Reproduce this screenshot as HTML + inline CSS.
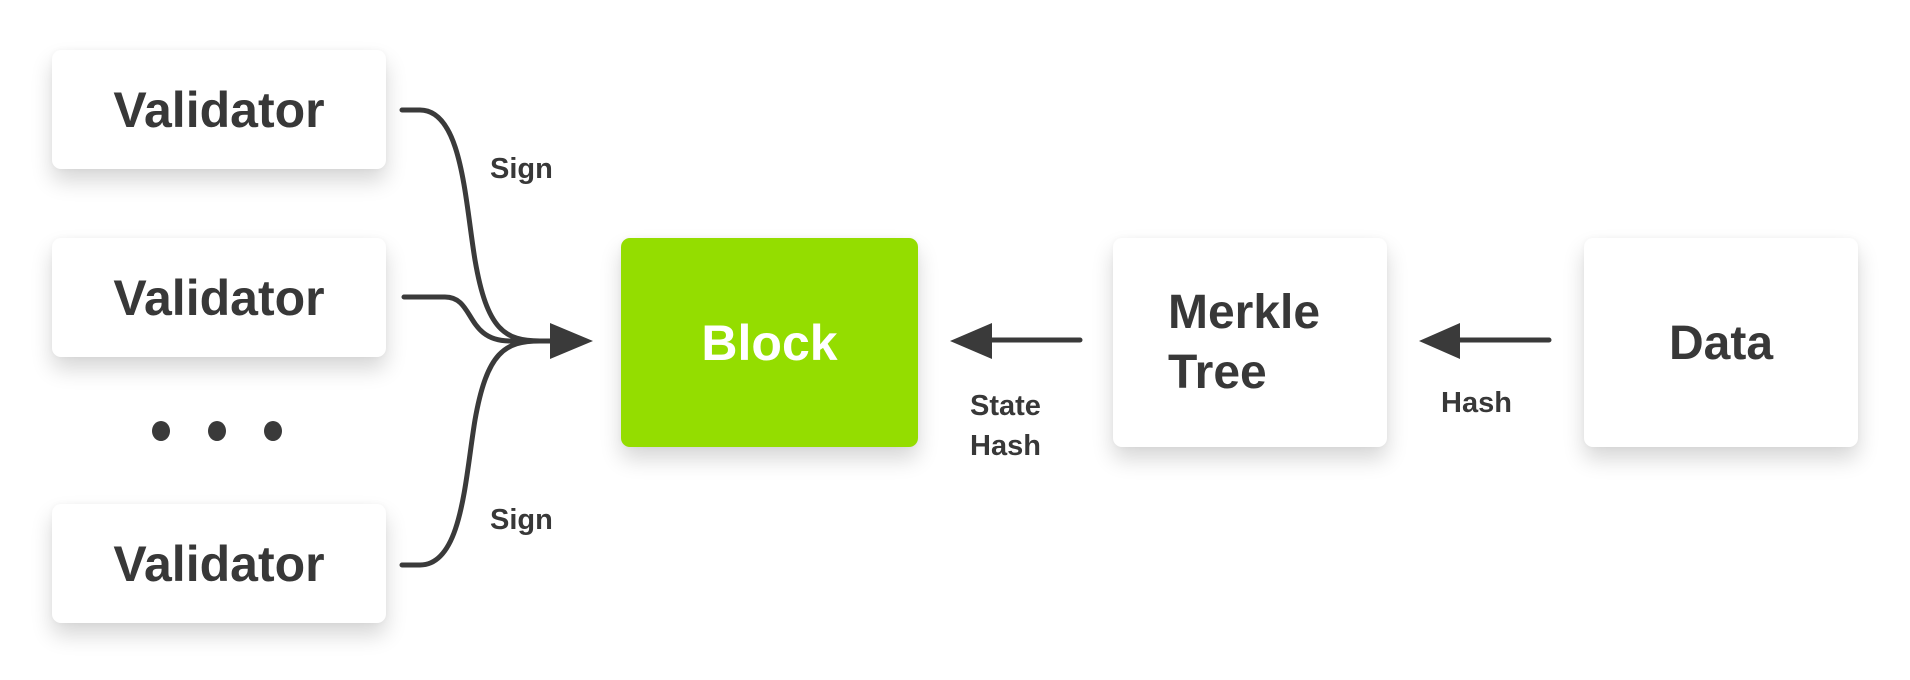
<!DOCTYPE html>
<html><head><meta charset="utf-8"><style>
html,body{margin:0;padding:0;background:#fff;}
body{width:1910px;height:680px;position:relative;overflow:hidden;font-family:"Liberation Sans",sans-serif;font-weight:bold;color:#383838;}
.box{position:absolute;background:#fff;border-radius:9px;box-shadow:0 12px 22px rgba(0,0,0,0.16),0 0 6px rgba(0,0,0,0.04);}
.v{left:52px;width:334px;height:119px;font-size:50px;line-height:121px;text-align:center;}
.t{position:absolute;white-space:nowrap;}
.lbl{font-size:29px;}
</style></head><body>
<div class="box v" style="top:50px">Validator</div>
<div class="box v" style="top:238px">Validator</div>
<div class="box v" style="top:504px">Validator</div>
<div class="box" style="left:621px;top:238px;width:297px;height:209px;background:#94dd00;color:#fff;font-size:50px;line-height:211px;text-align:center;">Block</div>
<div class="box" style="left:1113px;top:238px;width:274px;height:209px;"></div>
<div class="t" style="left:1168px;top:283px;font-size:48px;line-height:60px;">Merkle<br>Tree</div>
<div class="box" style="left:1584px;top:238px;width:274px;height:209px;font-size:48px;line-height:211px;text-align:center;">Data</div>
<svg width="1910" height="680" style="position:absolute;left:0;top:0">
<g fill="none" stroke="#3a3a3a" stroke-width="5" stroke-linecap="round">
<path d="M402 110 H420 C462 110 465 200 475 260 C487 330 505 341 540 341"/>
<path d="M404 297 H445 C475 297 465 341 510 341 H552"/>
<path d="M402 565 H420 C462 565 465 480 475 420 C487 352 505 341 540 341"/>
<path d="M990 340 H1080"/>
<path d="M1458 340 H1549"/>
</g>
<g fill="#3a3a3a">
<polygon points="550,323 593,341 550,359"/>
<polygon points="950,341 992,323 992,359"/>
<polygon points="1419,341 1460,323 1460,359"/>
<ellipse cx="161" cy="431" rx="9" ry="10"/>
<ellipse cx="217" cy="431" rx="9" ry="10"/>
<ellipse cx="273" cy="431" rx="9" ry="10"/>
</g>
</svg>
<div class="t lbl" style="left:490px;top:153px;">Sign</div>
<div class="t lbl" style="left:490px;top:504px;">Sign</div>
<div class="t lbl" style="left:970px;top:386px;line-height:40px;">State<br>Hash</div>
<div class="t lbl" style="left:1441px;top:387px;">Hash</div>
</body></html>
